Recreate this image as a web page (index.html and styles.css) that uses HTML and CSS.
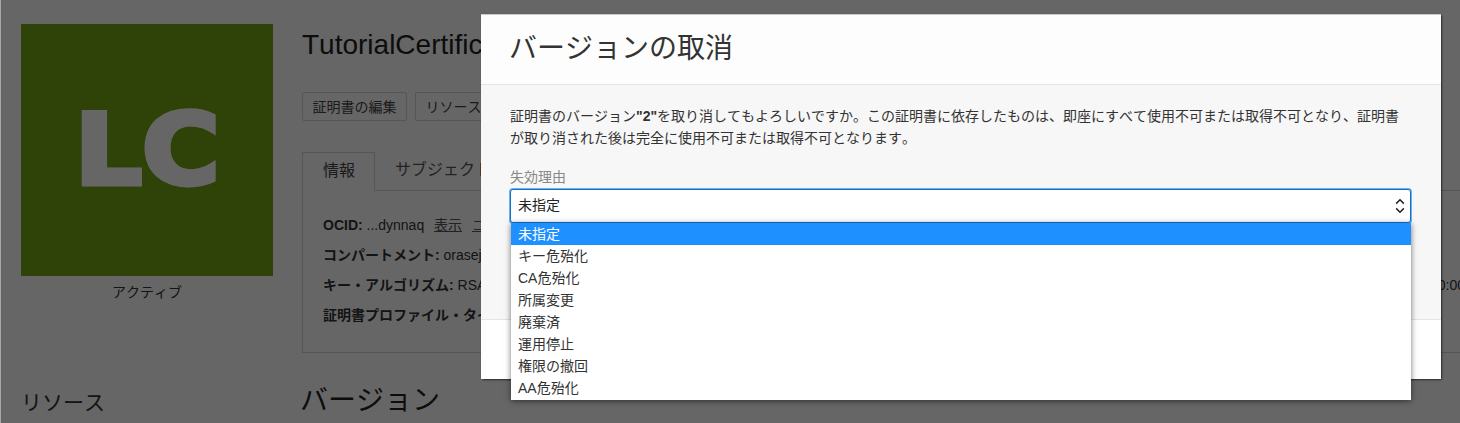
FILE: index.html
```html
<!DOCTYPE html>
<html lang="ja">
<head>
<meta charset="utf-8">
<title>バージョンの取消</title>
<link rel="stylesheet" href="styles.css">
</head>
<body>
<div class="page">
  <div class="top">
    <aside class="side">
      <div class="logo"><span class="logo-text">LC</span></div>
      <div class="status">アクティブ</div>
    </aside>
    <main class="content">
      <h1 class="name">TutorialCertificate</h1>
      <div class="actions">
        <button class="btn">証明書の編集</button>
        <button class="btn">リソースの移動</button>
      </div>
      <div class="tabs">
        <span class="tab active">情報</span>
        <span class="tab">サブジェクト情報</span>
      </div>
      <div class="panel">
        <div class="col">
          <p class="row"><b>OCID:</b> ...dynnaq <a class="link">表示</a> <a class="link">コピー</a></p>
          <p class="row"><b>コンパートメント:</b> orasejapan</p>
          <p class="row"><b>キー・アルゴリズム:</b> RSA2048</p>
          <p class="row"><b>証明書プロファイル・タイプ:</b> TLSサーバー</p>
        </div>
        <div class="col col-right">
          <p class="row">&nbsp;</p>
          <p class="row">&nbsp;</p>
          <p class="row">2021-01-01 00:00:00</p>
        </div>
      </div>
    </main>
  </div>
  <div class="bottom">
    <h3 class="res">リソース</h3>
    <h2 class="ver">バージョン</h2>
  </div>
</div>
<div class="scrim"></div>
<section class="modal">
  <header class="modal-head"><h2 class="modal-title">バージョンの取消</h2></header>
  <div class="modal-body">
    <p class="desc">証明書のバージョン<b>"2"</b>を取り消してもよろしいですか。この証明書に依存したものは、即座にすべて使用不可または取得不可となり、証明書が取り消された後は完全に使用不可または取得不可となります。</p>
    <div class="label">失効理由</div>
    <div class="select">
      <span>未指定</span>
      <svg class="updown" width="10" height="16" viewBox="0 0 10 16"><path d="M1.2 5.6 5 1.8l3.8 3.8M1.2 10.4 5 14.2l3.8-3.8" fill="none" stroke="#222" stroke-width="1.5"/></svg>
    </div>
  </div>
  <footer class="modal-foot"></footer>
</section>
<ul class="options">
  <li class="selected">未指定</li>
  <li>キー危殆化</li>
  <li>CA危殆化</li>
  <li>所属変更</li>
  <li>廃棄済</li>
  <li>運用停止</li>
  <li>権限の撤回</li>
  <li>AA危殆化</li>
</ul>
</body>
</html>
```
FILE: styles.css
```css
* { box-sizing: border-box; }
html, body { margin: 0; height: 423px; overflow: hidden; }
body {
  background: #fff;
  color: #333;
  font: 14px/22px "Liberation Sans", "Noto Sans CJK JP", sans-serif;
  font-kerning: none;
  text-spacing-trim: space-all;
  position: relative;
}
.page { padding: 24px 0 0 21px; width: 1700px; }
.top { display: flex; gap: 29px; }
.side { width: 252px; flex: none; }
.logo {
  height: 252px;
  background: #76a818;
  color: #fff;
  font-family: "DejaVu Sans", sans-serif;
  font-weight: 700;
  font-size: 98px;
  line-height: 252px;
  text-align: center;
  -webkit-text-stroke: 5px #fff;
}
.logo-text { display: inline-block; transform: scaleX(1.08); }
.status { text-align: center; margin-top: 5px; line-height: 22px; }
.content { flex: 1; }
.name { margin: 0; font-size: 28px; font-weight: 400; line-height: 42px; color: #222; }
.actions { display: flex; gap: 8px; margin-top: 26px; }
.btn {
  height: 29px;
  padding: 0 9.5px;
  background: transparent;
  border: 1px solid #d5d5d5;
  border-radius: 2px;
  font: inherit;
  font-kerning: none;
  color: #444;
}
.tabs { display: flex; margin-top: 31px; height: 38px; position: relative; }
.tab { padding: 7px 20px; color: #555; font-size: 16px; white-space: nowrap; }
.tab.active {
  border: 1px solid #d5d5d5;
  border-bottom: 0;
  background: #fff;
  position: relative;
  width: 73px;
  height: 39px;
  color: #444;
}
.panel {
  border: 1px solid #d5d5d5;
  height: 163px;
  padding: 23px 20px 0;
  display: flex;
  width: 1300px;
}
.col { width: 1012px; flex: none; }
.row { margin: 0 0 8px; line-height: 22px; white-space: nowrap; }
.link { text-decoration: underline; color: #555; margin-left: 6px; }
.bottom { display: flex; margin-top: 24px; }
.res { margin: 0; width: 279px; font-size: 21px; font-weight: 400; line-height: 44px; padding-top: 4px; color: #333; }
.ver { margin: 2px 0 0; font-size: 28px; font-weight: 400; line-height: 44px; color: #222; }
.scrim {
  position: absolute;
  inset: 0;
  background: rgba(0, 0, 0, .6);
  background-clip: padding-box;
  border-left: 1px solid #a8a8a8;
}
.modal {
  position: absolute;
  left: 481px;
  top: 14px;
  width: 960px;
  height: 365px;
  background: #fff;
  border-radius: 2px;
  box-shadow: 1px 1px 2px rgba(0, 0, 0, .6);
  display: flex;
  flex-direction: column;
}
.modal-head {
  height: 71px;
  background: #fdfdfd;
  border-top: 1px solid #c4ccd4;
  border-bottom: 1px solid #e4e4e4;
  padding: 13px 28px 0;
}
.modal-title { margin: 0; font-size: 28px; font-weight: 400; line-height: 42px; color: #333; }
.modal-body { height: 235px; background: #f7f7f7; border-bottom: 1px solid #e4e4e4; padding: 20px 29px 0; }
.desc { margin: 0; color: #333; width: 892px; }
.label { margin-top: 17px; color: #888; line-height: 22px; }
.select {
  margin-top: 1px;
  width: 901px;
  height: 34px;
  background: #fff;
  border: 1px solid #1273cf;
  border-radius: 3px;
  box-shadow: 0 0 0 1px rgba(60, 140, 225, .7);
  padding: 0 5.5px 3px 7px;
  display: flex;
  align-items: center;
  justify-content: space-between;
  color: #222;
}
.updown { margin-top: 3px; }
.modal-foot { flex: 1; background: #fff; }
.options {
  position: absolute;
  left: 511px;
  top: 223px;
  width: 900px;
  height: 177px;
  margin: 0;
  padding: 0;
  list-style: none;
  background: #fff;
  box-shadow: 0 1px 6px rgba(0, 0, 0, .55);
  color: #333;
}
.options li { height: 22px; line-height: 22px; padding: 0 7px; }
.options .selected { background: #1e90ff; color: #fff; }
```
